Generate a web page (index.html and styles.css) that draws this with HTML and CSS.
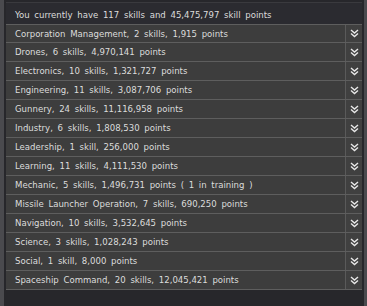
FILE: index.html
```html
<!doctype html>
<html lang="en">
    <head>
        <meta charset="UTF-8">
        <title>Skills</title>
        <link rel="stylesheet" href="styles.css">
    </head>
    <body>
        <div class="window">
            <div class="summary">You currently have 117 skills and 45,475,797 skill points</div>
            <div class="groups">
                <div class="group"><span class="label">Corporation Management, 2 skills, 1,915 points</span><span class="toggle"></span></div>
                <div class="group"><span class="label">Drones, 6 skills, 4,970,141 points</span><span class="toggle"></span></div>
                <div class="group"><span class="label">Electronics, 10 skills, 1,321,727 points</span><span class="toggle"></span></div>
                <div class="group"><span class="label">Engineering, 11 skills, 3,087,706 points</span><span class="toggle"></span></div>
                <div class="group"><span class="label">Gunnery, 24 skills, 11,116,958 points</span><span class="toggle"></span></div>
                <div class="group"><span class="label">Industry, 6 skills, 1,808,530 points</span><span class="toggle"></span></div>
                <div class="group"><span class="label">Leadership, 1 skill, 256,000 points</span><span class="toggle"></span></div>
                <div class="group"><span class="label">Learning, 11 skills, 4,111,530 points</span><span class="toggle"></span></div>
                <div class="group"><span class="label">Mechanic, 5 skills, 1,496,731 points ( 1 in training )</span><span class="toggle"></span></div>
                <div class="group"><span class="label">Missile Launcher Operation, 7 skills, 690,250 points</span><span class="toggle"></span></div>
                <div class="group"><span class="label">Navigation, 10 skills, 3,532,645 points</span><span class="toggle"></span></div>
                <div class="group"><span class="label">Science, 3 skills, 1,028,243 points</span><span class="toggle"></span></div>
                <div class="group"><span class="label">Social, 1 skill, 8,000 points</span><span class="toggle"></span></div>
                <div class="group"><span class="label">Spaceship Command, 20 skills, 12,045,421 points</span><span class="toggle"></span></div>
            </div>
        </div>
        <script>
            // same double chevron in every toggle cell
            const chevron = '<svg width="9" height="9" viewBox="0 0 9 9"><path d="M1 1l3.5 3 3.5-3M1 4.5l3.5 3 3.5-3" fill="none" stroke="#e8e8e8" stroke-width="1.4"/></svg>';
            document.querySelectorAll('.toggle').forEach(el => { el.innerHTML = chevron; });
        </script>
    </body>
</html>
```
FILE: styles.css
```css
* {
    box-sizing: border-box;
}
html {
    background-color: #27272b;
}
body {
    margin: 0;
    font-family: "DejaVu Sans Condensed", "DejaVu Sans", sans-serif;
    font-size: 9.5px;
    word-spacing: 2px;
    color: #dcdcdc;
}
.window {
    height: 306px;
    border-left: 4px solid #4a4a4e;
    border-right: 3px solid #4a4a4e;
    padding: 2px 2px 0 2px;
}
.summary {
    height: 22px;
    padding: 6px 0 0 9px;
    border-top: 1px solid #3a3a3e;
    background-color: #2b2b30;
}
.group {
    display: flex;
    height: 19px;
    background-color: #3d3d3d;
    border-bottom: 1px solid #5e5e5e;
}
.group:first-child {
    border-top: 1px solid #5e5e5e;
}
.label {
    flex: 1;
    padding: 3px 0 0 9px;
    white-space: nowrap;
}
.toggle {
    width: 17px;
    display: flex;
    align-items: center;
    justify-content: center;
    border-left: 1px solid #5a5a5a;
    background-color: #404040;
}
```
